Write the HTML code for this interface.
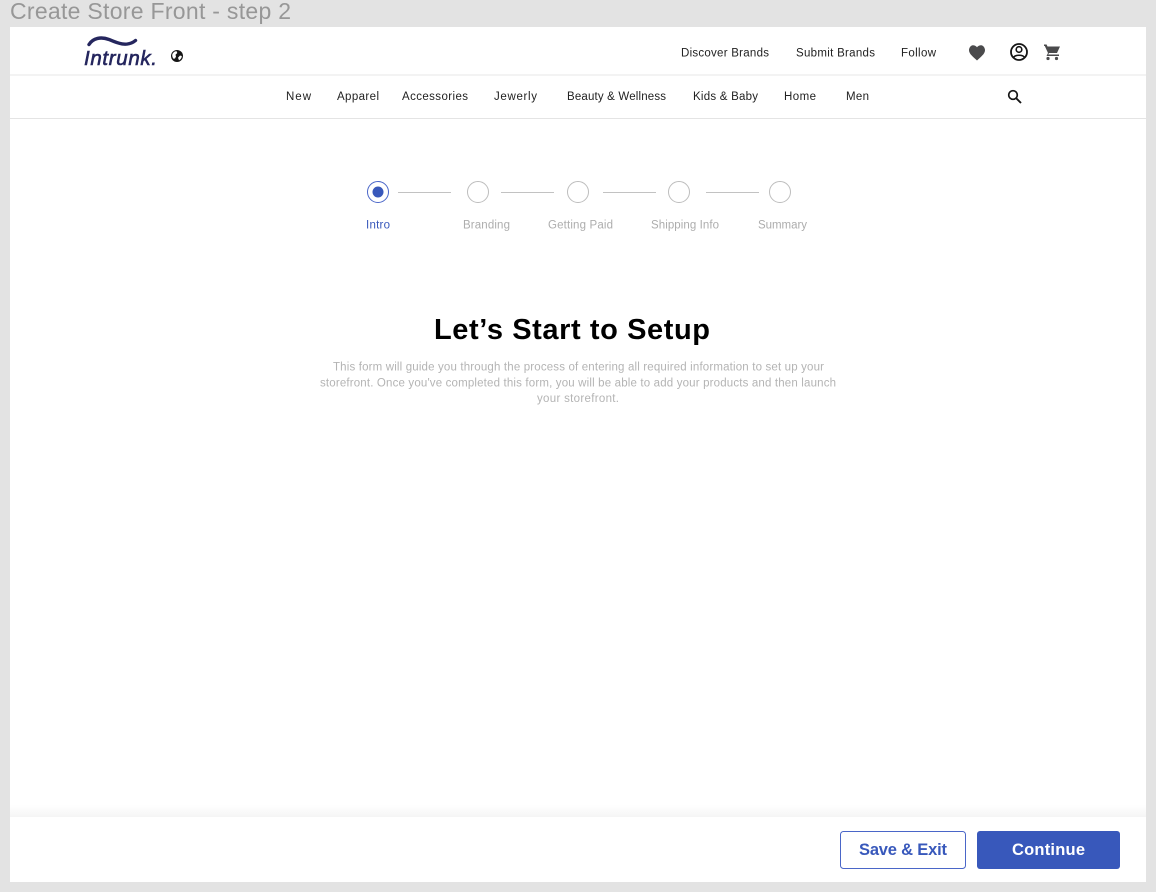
<!DOCTYPE html>
<html lang="en"><head><meta charset="utf-8"><title>Create Store Front - step 2</title>
<style>
html,body{margin:0;padding:0;background:#e3e3e3;width:1156px;height:892px;overflow:hidden}
svg{position:absolute;left:0;top:0;display:block}
text{font-family:"Liberation Sans",sans-serif}
</style></head><body>
<svg width="1156" height="892" viewBox="0 0 1156 892" xmlns="http://www.w3.org/2000/svg">
<defs><linearGradient id="g" x1="0" y1="0" x2="0" y2="1"><stop offset="0" stop-color="#fff"/><stop offset="1" stop-color="#f5f5f5"/></linearGradient></defs>
<rect width="1156" height="892" fill="#e3e3e3"/>
<text x="10" y="19" font-size="23" fill="#979797" textLength="281">Create Store Front - step 2</text>
<rect x="10" y="27" width="1136" height="855" fill="#fff"/>
<rect x="10" y="74" width="1136" height="2" fill="#f3f3f3"/>
<rect x="10" y="118" width="1136" height="1" fill="#e4e4e4"/>
<rect x="10" y="805" width="1136" height="12" fill="url(#g)"/>

<path d="M89 44.500C93 38 101 36.500 109 39.500C117 43 127 47.500 135.500 40.500" fill="none" stroke="#25265e" stroke-width="3.400" stroke-linecap="round"/>
<text x="84" y="65" font-size="20.500" font-style="italic" fill="#25265e" stroke="#25265e" stroke-width=".6" textLength="73">Intrunk.</text>
<circle cx="177" cy="56" r="6" fill="#151515"/>
<path d="M172.300 54.500C172.800 52.800 174.500 51.200 176.500 51.100L177.300 53 175.500 54.700 176 56.500 175 58.500 173.500 58.800C172.500 57.500 172 56 172.300 54.500zM179 60.300L178 57.700 180 55.500 181.800 56C181.800 57.800 180.600 59.500 179 60.300z" fill="#fff"/>

<g font-size="11.500" fill="#222">
<text x="681" y="56.500" textLength="88">Discover Brands</text>
<text x="796" y="56.500" textLength="79">Submit Brands</text>
<text x="901" y="56.500" textLength="35">Follow</text>
<text x="286" y="100" textLength="25">New</text>
<text x="337" y="100" textLength="42">Apparel</text>
<text x="402" y="100" textLength="66">Accessories</text>
<text x="494" y="100" textLength="43">Jewerly</text>
<text x="567" y="100" textLength="99">Beauty &amp; Wellness</text>
<text x="693" y="100" textLength="65">Kids &amp; Baby</text>
<text x="784" y="100" textLength="32">Home</text>
<text x="846" y="100" textLength="23">Men</text>
</g>

<path d="M977 60.500l-1.200-1.100C971.500 55.500 969 53.100 969 50.100 969 47.900 970.700 45.200 972.900 45.200c1.600 0 3.100.8 4.100 2 1-1.200 2.500-2 4.100-2 2.200 0 3.900 2.700 3.900 4.900 0 3-2.500 5.400-6.800 9.300z" fill="#4a4a4c"/>
<circle cx="1019" cy="52" r="8" fill="none" stroke="#151515" stroke-width="1.800"/>
<circle cx="1019" cy="49.500" r="2.800" fill="none" stroke="#151515" stroke-width="1.600"/>
<path d="M1013.500 57.500C1015 54.500 1023 54.500 1024.500 57.500" fill="none" stroke="#151515" stroke-width="1.600"/>
<path d="M1044 44.500h2.600l.9 2H1060l-3 6.500h-8l-.8 1.500H1059v1.500h-12.500l1.500-3-3.200-7H1044z" fill="#4a4a4c"/>
<circle cx="1048" cy="58.500" r="1.600" fill="#4a4a4c"/><circle cx="1056.500" cy="58.500" r="1.600" fill="#4a4a4c"/>
<circle cx="1013" cy="95" r="4.300" fill="none" stroke="#151515" stroke-width="1.700"/>
<path d="M1016 98l5 5" stroke="#151515" stroke-width="1.900"/>

<circle cx="378" cy="192" r="10.500" fill="#fff" stroke="#4a66c8" stroke-width="1"/>
<circle cx="378" cy="192" r="5.500" fill="#3858bb"/>
<g fill="#fff" stroke="#bdbdbd" stroke-width="1">
<circle cx="478" cy="192" r="10.500"/><circle cx="578" cy="192" r="10.500"/><circle cx="679" cy="192" r="10.500"/><circle cx="780" cy="192" r="10.500"/>
</g>
<g fill="#c2c2c2">
<rect x="398" y="192" width="53" height="1"/><rect x="501" y="192" width="53" height="1"/><rect x="603" y="192" width="53" height="1"/><rect x="706" y="192" width="53" height="1"/>
</g>
<g font-size="11.500">
<text x="366" y="228.500" fill="#3858bb" textLength="24">Intro</text>
<g fill="#adadad">
<text x="463" y="228.500" textLength="47">Branding</text>
<text x="548" y="228.500" textLength="65">Getting Paid</text>
<text x="651" y="228.500" textLength="68">Shipping Info</text>
<text x="758" y="228.500" textLength="49">Summary</text>
</g></g>

<text x="434" y="339" font-size="29" font-weight="700" fill="#000" textLength="276">Let’s Start to Setup</text>
<g font-size="11.500" fill="#b4b4b4">
<text x="333" y="370.500" textLength="491">This form will guide you through the process of entering all required information to set up your</text>
<text x="320" y="386.500" textLength="516">storefront. Once you've completed this form, you will be able to add your products and then launch</text>
<text x="537" y="402" textLength="82">your storefront.</text>
</g>

<rect x="840.500" y="831.500" width="125" height="37" rx="3" fill="#fff" stroke="#4a66c8" stroke-width="1"/>
<rect x="977" y="831" width="143" height="38" rx="3" fill="#3858bb"/>
<text x="859" y="855" font-size="16.500" font-weight="700" fill="#3858bb" textLength="88">Save &amp; Exit</text>
<text x="1012" y="855" font-size="16.500" font-weight="700" fill="#fff" textLength="73">Continue</text>
</svg>
</body></html>
